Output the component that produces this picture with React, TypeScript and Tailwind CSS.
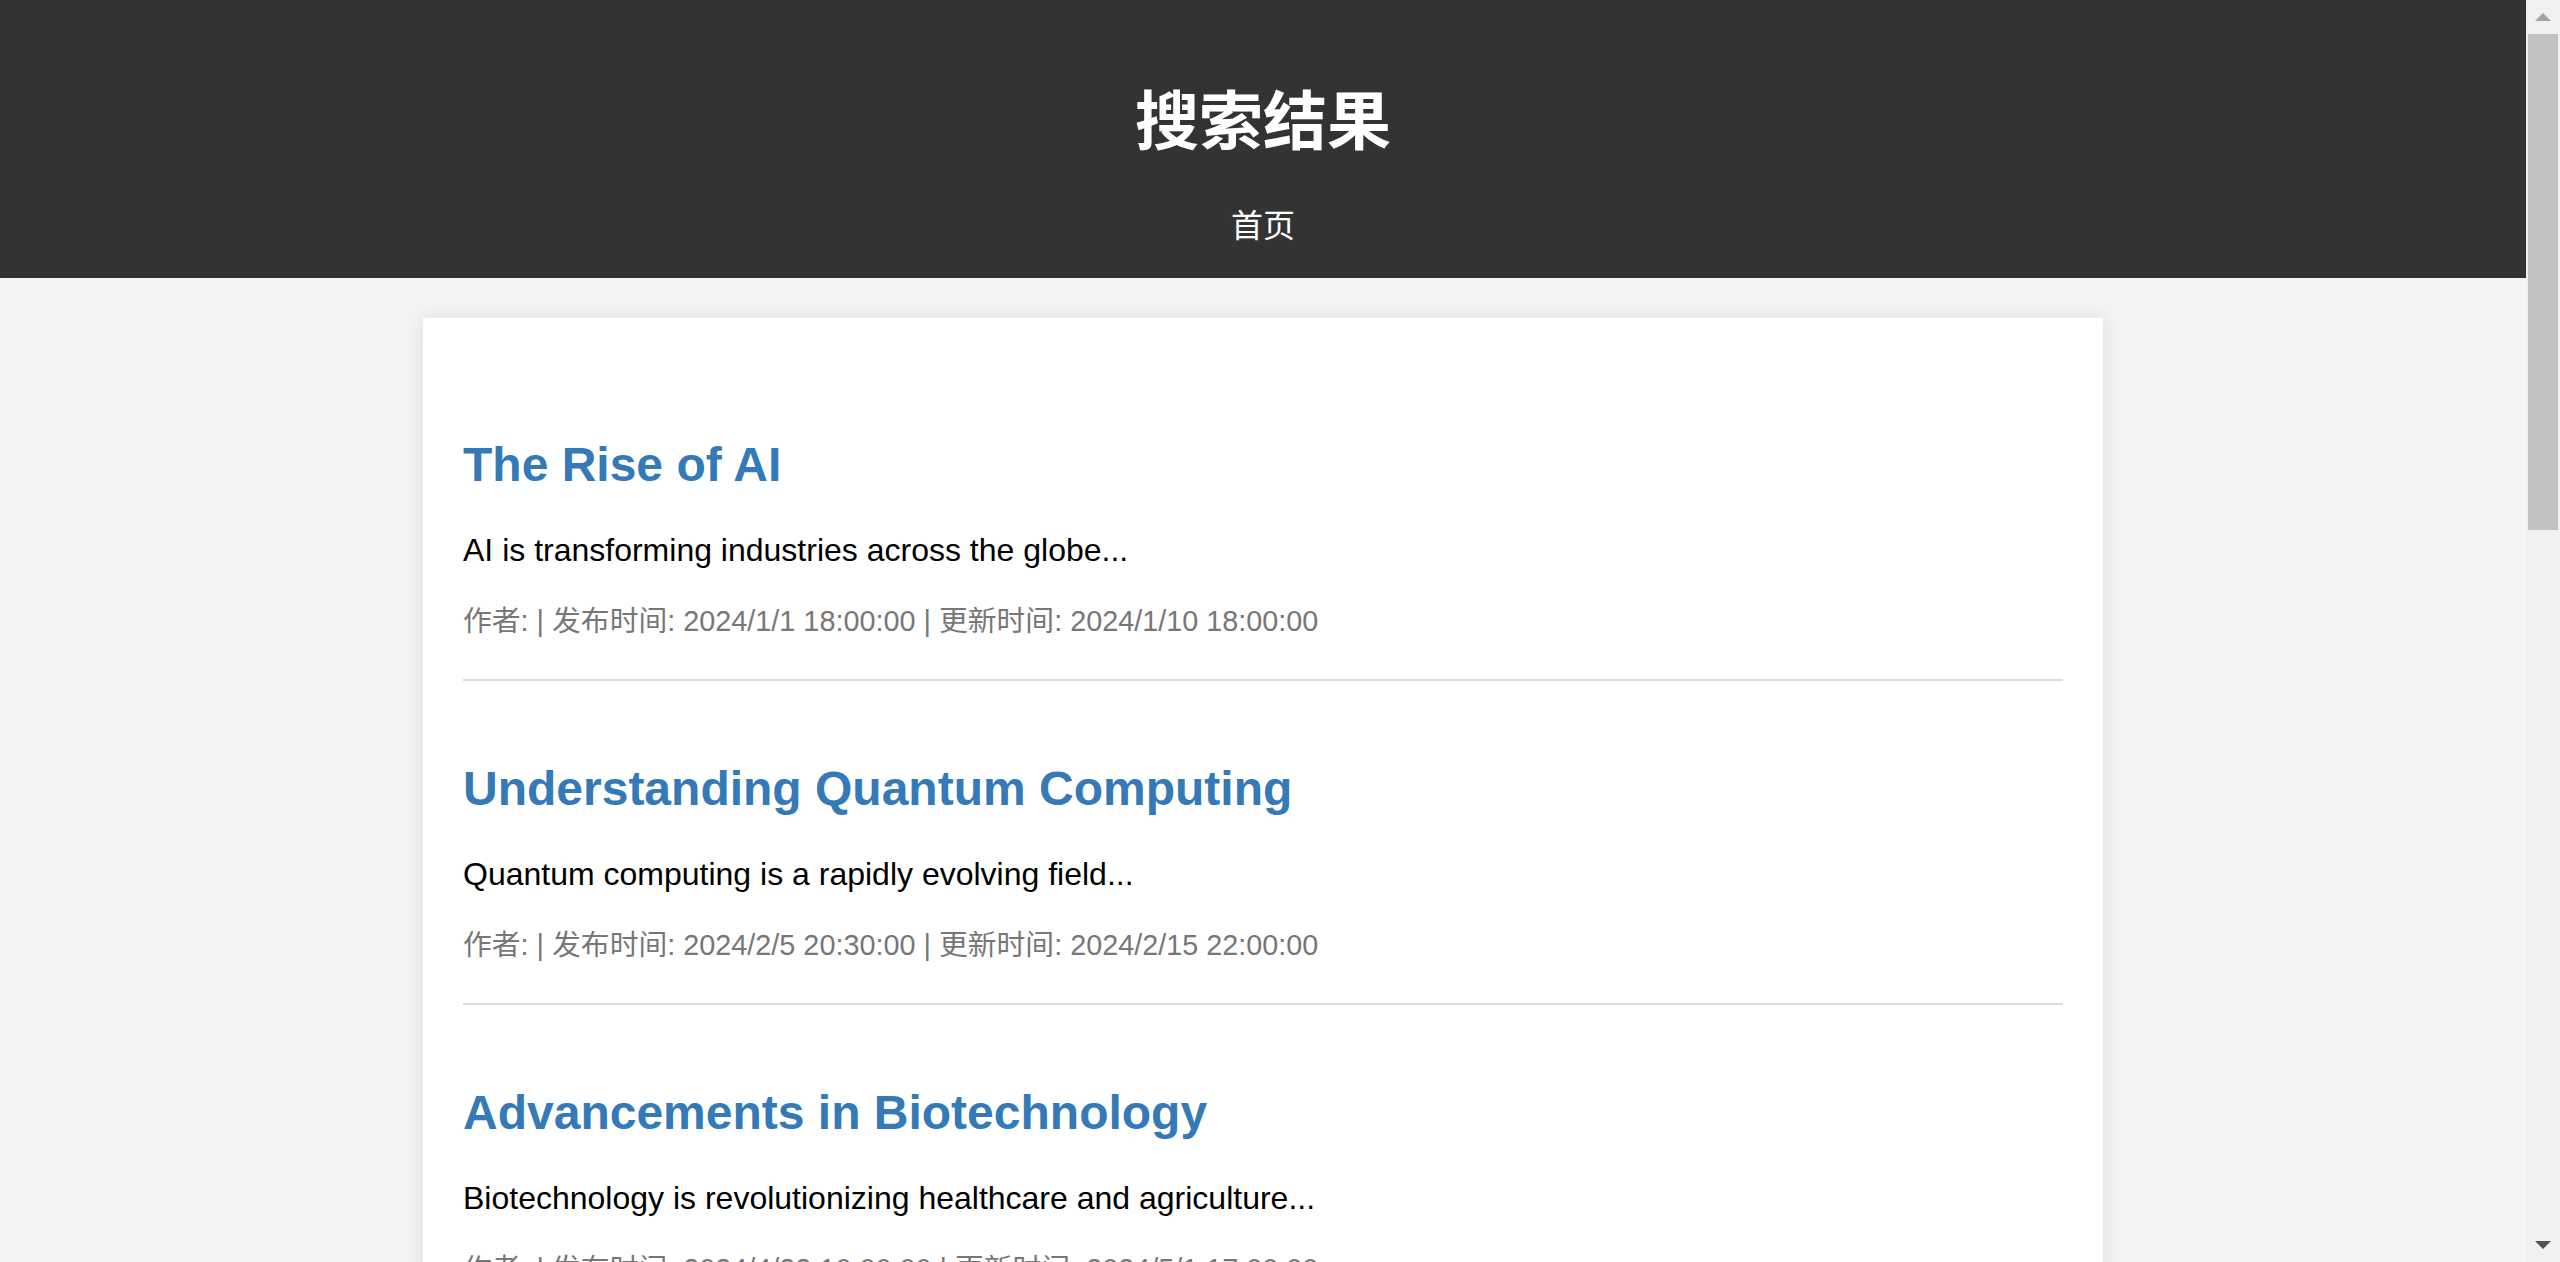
import React from 'react';

interface Post {
  title: string;
  summary: string;
  published: string;
  updated: string;
}

const posts: Post[] = [
  {
    title: 'The Rise of AI',
    summary: 'AI is transforming industries across the globe...',
    published: '2024/1/1 18:00:00',
    updated: '2024/1/10 18:00:00',
  },
  {
    title: 'Understanding Quantum Computing',
    summary: 'Quantum computing is a rapidly evolving field...',
    published: '2024/2/5 20:30:00',
    updated: '2024/2/15 22:00:00',
  },
  {
    title: 'Advancements in Biotechnology',
    summary: 'Biotechnology is revolutionizing healthcare and agriculture...',
    published: '2024/4/22 10:00:00',
    updated: '2024/5/1 17:00:00',
  },
  {
    title: 'The Future of Renewable Energy',
    summary: 'Renewable energy sources are becoming more efficient...',
    published: '2024/6/3 09:15:00',
    updated: '2024/6/12 11:45:00',
  },
];

const font = "font-['Liberation_Sans','Noto_Sans_CJK_SC',sans-serif]";

const PostItem: React.FC<{ post: Post }> = ({ post }) => (
  <div className="border-b-2 border-[#ddd] pb-[42px]">
    <h2 className="mt-[80px] text-[48px] leading-[55px] font-bold text-[#337ab7]">
      <a href="#">{post.title}</a>
    </h2>
    <p className="mt-[40px] text-[32px] leading-[37px] text-black">{post.summary}</p>
    <p className="mt-[36px] text-[28.8px] leading-[32px] text-[#777]">
      作者: | 发布时间: {post.published} | 更新时间: {post.updated}
    </p>
  </div>
);

export default function App() {
  return (
    <div className={`${font} flex h-[1262px] overflow-hidden bg-[#f4f4f4]`}>
      <div className="flex-1 overflow-hidden">
        {/* Header */}
        <header className="bg-[#333] text-white text-center pt-[80px] pb-[32px]">
          <h1 className="text-[64px] leading-[84px] font-bold">搜索结果</h1>
          <nav className="mt-[42px] text-[32px] leading-[40px]">
            <a href="#" className="text-white">首页</a>
          </nav>
        </header>

        {/* Results */}
        <main className="mx-auto mt-[40px] w-[1680px] bg-white px-[40px] pt-[39px] pb-[40px] shadow-[0_0_20px_rgba(0,0,0,0.1)]">
          {posts.map((post) => (
            <PostItem key={post.title} post={post} />
          ))}
        </main>
      </div>

      {/* Scrollbar */}
      <div className="flex w-[34px] flex-col items-center bg-[#f1f1f1]">
        <div className="flex h-[34px] items-center justify-center">
          <svg width="16" height="8" viewBox="0 0 16 8">
            <polygon points="0,8 8,0 16,8" fill="#a3a3a3" />
          </svg>
        </div>
        <div className="h-[496px] w-[30px] bg-[#c1c1c1]" />
        <div className="flex-1" />
        <div className="flex h-[34px] items-center justify-center">
          <svg width="16" height="8" viewBox="0 0 16 8">
            <polygon points="0,0 16,0 8,8" fill="#505050" />
          </svg>
        </div>
      </div>
    </div>
  );
}
